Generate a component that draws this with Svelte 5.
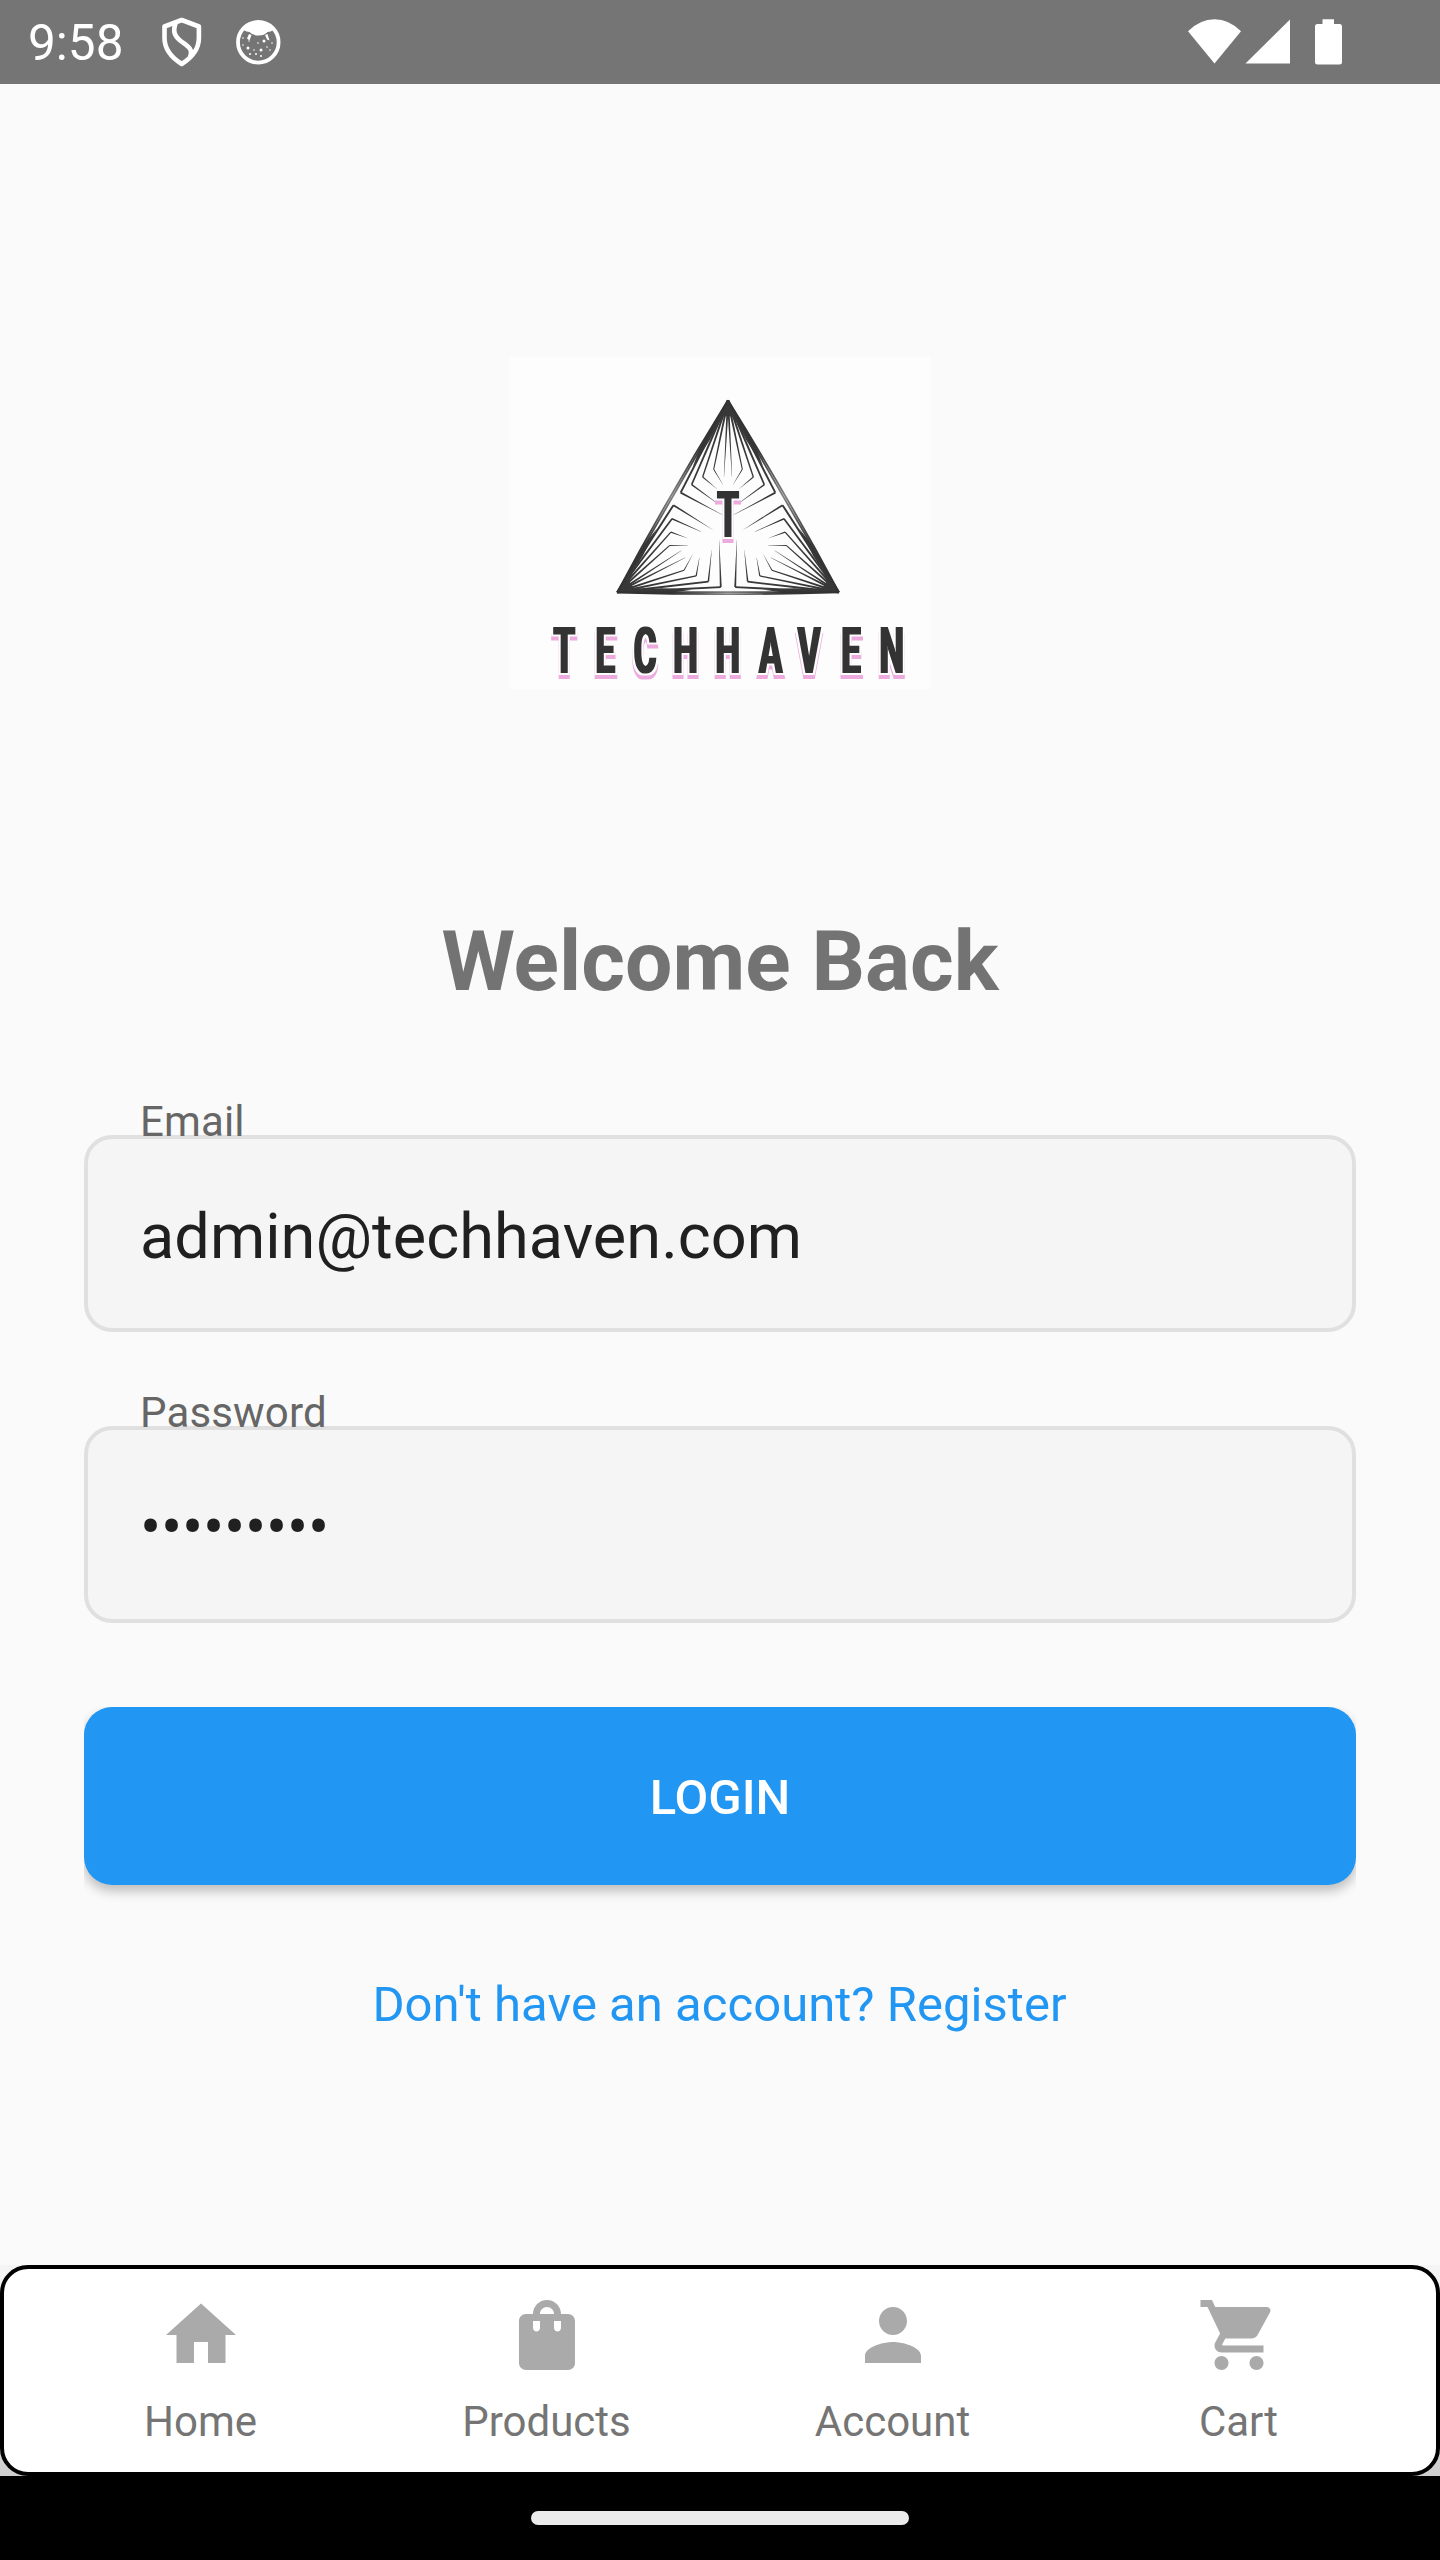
<script>
  const navItems = [
    { label: 'Home', path: 'M10 20v-6h4v6h5v-8h3L12 3 2 12h3v8z' },
    {
      label: 'Products',
      path: 'M18 6h-2c0-2.21-1.79-4-4-4S8 3.79 8 6H6c-1.1 0-2 .9-2 2v12c0 1.1.9 2 2 2h12c1.1 0 2-.9 2-2V8c0-1.100-.9-2-2-2zm-8 4c0 .55-.45 1-1 1s-1-.45-1-1V8h2v2zm2-6c1.100 0 2 .9 2 2h-4c0-1.100.9-2 2-2zm4 6c0 .55-.45 1-1 1s-1-.45-1-1V8h2v2z'
    },
    {
      label: 'Account',
      path: 'M12 12c2.210 0 4-1.790 4-4s-1.790-4-4-4-4 1.790-4 4 1.790 4 4 4zm0 2c-2.670 0-8 1.340-8 4v2h16v-2c0-2.660-5.330-4-8-4z'
    },
    {
      label: 'Cart',
      path: 'M7 18c-1.100 0-1.990.9-1.990 2S5.900 22 7 22s2-.9 2-2-.9-2-2-2zM1 2v2h2l3.600 7.590-1.350 2.450c-.16.28-.25.61-.25.96 0 1.100.9 2 2 2h12v-2H7.420c-.14 0-.25-.11-.25-.25l.03-.12.9-1.630h7.450c.75 0 1.410-.41 1.750-1.030l3.580-6.490A1.003 1.003 0 0 0 20 4H5.210l-.94-2H1zm16 16c-1.100 0-1.990.9-1.990 2s.89 2 1.990 2 2-.9 2-2-.9-2-2-2z'
    }
  ];

  // Half of one emblem fan: apex, elbow, and the point where the stroke tapers out.
  const apex = [684, 152];
  const rays = [
    { elbow: [727, 358], end: [699, 404], width: 3 },
    { elbow: [760, 381], end: [717, 417], width: 3.8 },
    { elbow: [793, 404], end: [716, 460], width: 4.8 },
    { elbow: [826, 428], end: [702, 494], width: 5.6 }
  ];

  function wedge(a, b, wa, wb) {
    const dx = b[0] - a[0];
    const dy = b[1] - a[1];
    const len = Math.hypot(dx, dy);
    const nx = -dy / len / 2;
    const ny = dx / len / 2;
    return [
      [a[0] + nx * wa, a[1] + ny * wa],
      [b[0] + nx * wb, b[1] + ny * wb],
      [b[0] - nx * wb, b[1] - ny * wb],
      [a[0] - nx * wa, a[1] - ny * wa]
    ]
      .map((p) => p.map((n) => n.toFixed(1)).join(','))
      .join(' ');
  }

  const halves = [0, 120, 240].flatMap((angle) => [
    `rotate(${angle} 684 535)`,
    `rotate(${angle} 684 535) translate(1368 0) scale(-1 1)`
  ]);

  const squeeze = 0.54;
  const letterX = [193, 316, 435, 556.5, 683, 812, 927, 1053, 1175.5]
    .map((x) => (x / squeeze).toFixed(1))
    .join(' ');

  const specks = [
    [243, 38, 0.8], [249, 41, 0.7], [264, 41, 1.5], [272, 43, 0.8], [243, 45, 0.8],
    [248, 48, 1.5], [254, 50, 0.8], [261, 50, 1.5], [267, 47, 0.8], [270, 50, 0.8],
    [250, 54, 1], [256, 54, 1], [261, 56, 1], [258, 43, 0.8]
  ];
</script>

<div class="screen">
  <header class="status">
    <div class="group">
      <span class="clock">9:58</span>
      <svg class="shield" viewBox="161 17 41 50" aria-hidden="true">
        <path d="M181.700 20 164.500 26.500V38c0 11 7 19.500 17.200 26 10.200-6.500 17.200-15 17.200-26V26.500z" />
        <path d="M175.500 23c-2.500 8-1.500 12.500 4 17 6 5 14.500 8 10.500 17" />
      </svg>
      <svg class="face" viewBox="235 19 47 47" aria-hidden="true">
        <circle class="ring" cx="258.300" cy="42.300" r="20.300" />
        <path d="M243.500 30q6-8 15-8t15 8q-3 2-6 2-3 3.500-9 3.500t-9-3.500q-3 0-6-2z" />
        <path d="M249 34l2.500 1-2 5.500-2.500-2zM267.500 34l-2.500 1 2 4.500 2.500 1z" />
        {#each specks as [x, y, r]}
          <circle cx={x} cy={y} {r} />
        {/each}
      </svg>
    </div>
    <svg class="signals" viewBox="1186 16 160 52" aria-hidden="true">
      <path d="M1188 31.200Q1200 19.200 1214.500 19.200T1241 31.200L1214.500 63.500z" />
      <path d="M1290 19.500V63.500H1245.500z" />
      <path d="M1322.500 19.200h11.500V24h5.500q2.500 0 2.500 2.500V62q0 2.500-2.500 2.500h-22q-2.500 0-2.500-2.500V26.500q0-2.500 2.500-2.500h5z" />
    </svg>
  </header>

  <main>
    <svg class="logo" viewBox="30 21 1260 996" role="img" aria-label="TechHaven">
      <defs>
        <linearGradient id="side" gradientUnits="userSpaceOnUse" x1="684" y1="149" x2="1018" y2="728">
          <stop offset="0.25" stop-color="#333" />
          <stop offset="0.5" stop-color="#808080" />
          <stop offset="0.75" stop-color="#333" />
        </linearGradient>
        <filter id="lettering" filterUnits="userSpaceOnUse" x="100" y="400" width="1180" height="610" color-interpolation-filters="sRGB">
          <feMorphology in="SourceGraphic" operator="dilate" radius="3 0.01" result="ink" />
          <feMorphology in="ink" operator="dilate" radius="6" result="grown" />
          <feFlood flood-color="#fdfdfd" />
          <feComposite in2="grown" operator="in" result="halo" />
          <feMorphology in="ink" operator="dilate" radius="5 0.01" />
          <feOffset dy="19" result="below" />
          <feFlood flood-color="#ecaade" />
          <feComposite in2="below" operator="in" result="pink" />
          <feMerge>
            <feMergeNode in="pink" />
            <feMergeNode in="halo" />
            <feMergeNode in="ink" />
          </feMerge>
        </filter>
      </defs>
      <rect class="plate" x="30" y="21" width="1260" height="996" />
      {#each halves as transform}
        <g class="fan" {transform}>
          {#each rays as ray}
            <polygon points={wedge(apex, ray.elbow, 7, ray.width)} />
            <polygon points={wedge(ray.elbow, ray.end, ray.width, 0.5)} />
          {/each}
          <polygon points={wedge(apex, [696, 380], 7, 0.6)} />
          <polygon points="684,149 684,196 698,202 716,226 740,272 790,350 770,300" />
        </g>
      {/each}
      {#each [0, 120, 240] as angle}
        <g class="side" transform="rotate({angle} 684 535)">
          <path d="M684 151Q858 431 1017 727" />
          <path d="M686 156Q849 437 1014 724" />
        </g>
      {/each}
      <g class="lettering" filter="url(#lettering)">
        <text transform="scale({squeeze} 1)" x={684 / squeeze} y="562">T</text>
        <text transform="scale({squeeze} 1)" x={letterX} y="968">TECHHAVEN</text>
      </g>
    </svg>

    <h1>Welcome Back</h1>

    <div class="field">
      <span class="caption">Email</span>
      <div class="box">admin@techhaven.com</div>
    </div>
    <div class="field">
      <span class="caption">Password</span>
      <div class="box masked">•••••••••</div>
    </div>

    <div class="action"><button>LOGIN</button></div>
    <a class="register" href="#register">Don't have an account? Register</a>
  </main>

  <div class="dock">
    <nav>
      {#each navItems as item}
        <div class="item">
          <svg viewBox="0 0 24 24" aria-hidden="true"><path d={item.path} /></svg>
          <span>{item.label}</span>
        </div>
      {/each}
    </nav>
  </div>
  <footer><div class="pill"></div></footer>
</div>

<style>
  :global(body) {
    margin: 0;
  }
  .screen {
    box-sizing: border-box;
    display: flex;
    flex-direction: column;
    width: 1440px;
    height: 2560px;
    overflow: hidden;
    background: #fafafa;
    font-family: Roboto, sans-serif;
  }
  .status {
    box-sizing: border-box;
    display: flex;
    flex: none;
    justify-content: space-between;
    height: 84px;
    padding: 0 94px 0 28px;
    background: #757575;
  }
  .group {
    display: flex;
    align-items: flex-start;
  }
  .clock {
    width: 133px;
    padding-top: 15px;
    color: #fff;
    font-size: 49.5px;
    line-height: 57px;
  }
  .shield {
    width: 41px;
    height: 50px;
    margin-top: 17px;
    fill: none;
    stroke: #fff;
    stroke-width: 4.6;
    stroke-linejoin: round;
  }
  .face {
    width: 47px;
    height: 47px;
    margin: 19px 0 0 33px;
    fill: #fff;
  }
  .ring {
    fill: none;
    stroke: #fff;
    stroke-width: 3.8;
  }
  .signals {
    width: 160px;
    height: 52px;
    margin-top: 16px;
    fill: #fff;
  }
  main {
    display: flex;
    flex: 1;
    flex-direction: column;
    min-height: 0;
    padding: 273px 84px 0;
  }
  .logo {
    flex: none;
    align-self: center;
    width: 420px;
    height: 332px;
  }
  .plate {
    fill: #fdfdfd;
  }
  .fan {
    fill: #383838;
  }
  .side {
    fill: none;
    stroke: url(#side);
    stroke-width: 5.5;
  }
  .lettering {
    fill: #333;
    font-size: 193px;
    font-weight: 700;
    text-anchor: middle;
  }
  h1 {
    margin: 224px 0 86px;
    color: #737373;
    font-size: 84px;
    font-weight: 700;
    line-height: 98px;
    text-align: center;
  }
  .field {
    display: flex;
    flex-direction: column;
    margin-bottom: 56px;
  }
  /* The caption baseline rests on the top border of its box. */
  .caption {
    z-index: 1;
    height: 49px;
    margin: 0 0 -11px 56px;
    color: #666;
    font-size: 42px;
    letter-spacing: 0.15px;
    line-height: 49px;
  }
  .box {
    box-sizing: border-box;
    height: 197px;
    padding: 61px 52px 0;
    border: 4px solid #e0e0e0;
    border-radius: 28px;
    background: #f5f5f5;
    color: #202020;
    font-size: 63px;
    letter-spacing: 0.06px;
    line-height: 74px;
  }
  .masked {
    letter-spacing: -0.25px;
  }
  .action {
    margin-top: 28px;
    padding-bottom: 30px;
    overflow: hidden;
  }
  button {
    display: block;
    width: 100%;
    height: 178px;
    padding: 2px 0 0;
    border: 0;
    border-radius: 28px;
    background: #2196f3;
    box-shadow: 0 6px 12px rgba(0, 0, 0, 0.25);
    color: #fff;
    font: 500 49px/57px Roboto, sans-serif;
  }
  .register {
    align-self: center;
    margin-top: 61px;
    padding-right: 1px;
    color: #2196f3;
    font-size: 49px;
    letter-spacing: 0.04px;
    line-height: 57px;
    text-decoration: none;
  }
  .dock {
    flex: none;
    height: 211px;
    background: linear-gradient(#f5f5f5, #cfcfcf);
  }
  nav {
    box-sizing: border-box;
    display: flex;
    height: 211px;
    padding: 24px 24px 0;
    border: 4px solid #000;
    border-radius: 28px;
    background: #fff;
  }
  .item {
    display: flex;
    flex: 1;
    flex-direction: column;
    align-items: center;
    gap: 20px;
    color: #757575;
    font-size: 42px;
    line-height: 49px;
  }
  .item span {
    padding-right: 1px;
  }
  .item svg {
    width: 84px;
    height: 84px;
    fill: #aaa;
  }
  footer {
    display: flex;
    flex: none;
    justify-content: center;
    height: 84px;
    background: #000;
  }
  .pill {
    width: 378px;
    height: 14px;
    margin-top: 35px;
    border-radius: 7px;
    background: #ebebeb;
  }
</style>
